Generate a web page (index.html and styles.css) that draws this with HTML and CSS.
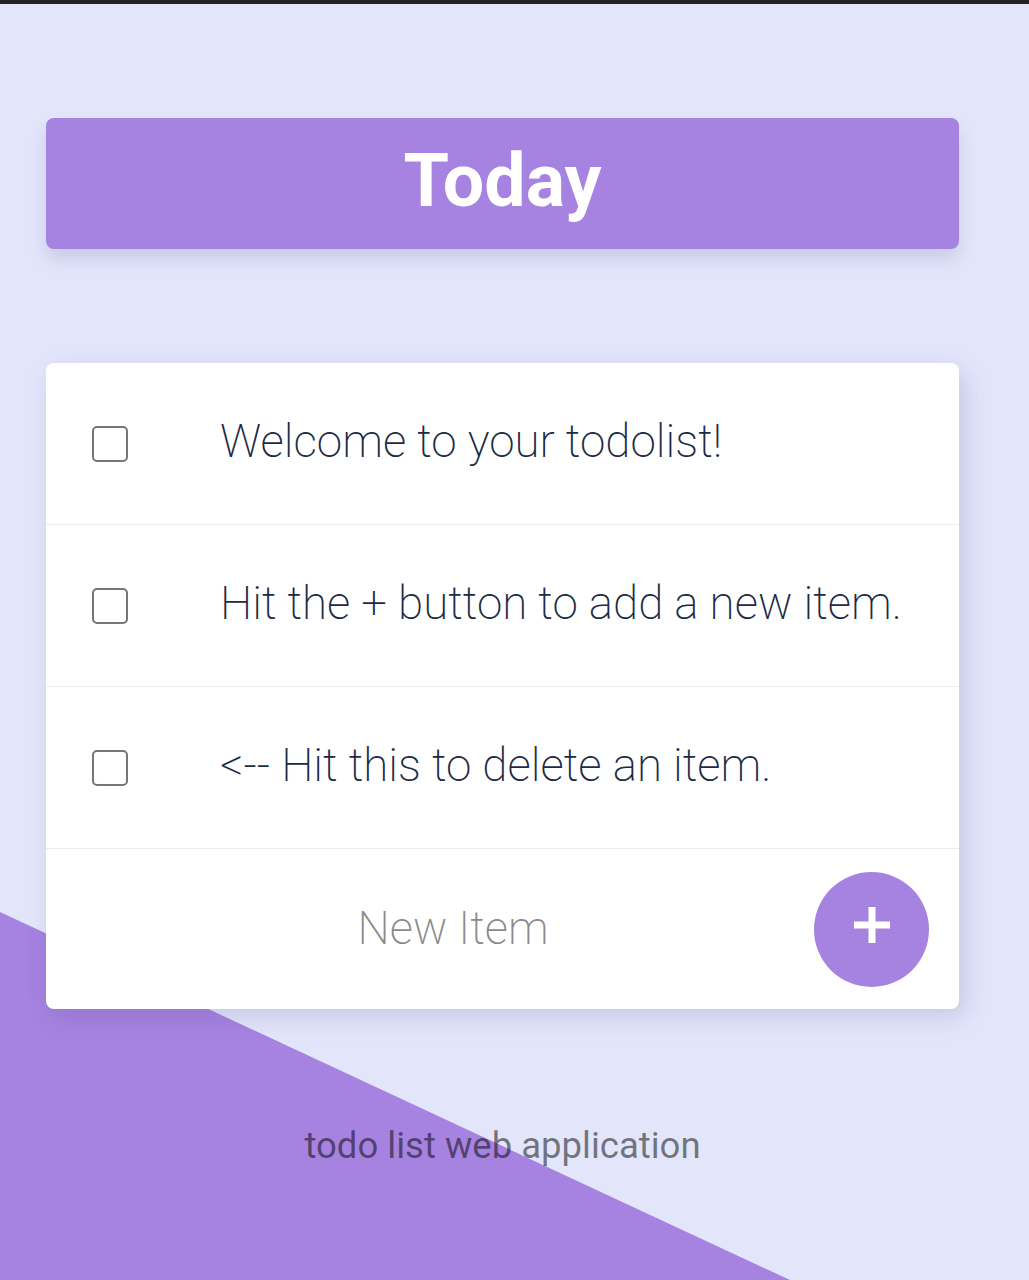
FILE: index.html
```html
<!DOCTYPE html>
<html lang="en">
<head>
<meta charset="utf-8">
<title>To Do List</title>
<link rel="stylesheet" href="styles.css">
</head>
<body>
<div class="topbar"></div>
<div class="backdrop"></div>
<main class="page">
  <div class="heading">
    <h1>Today</h1>
  </div>
  <div class="card">
    <div class="item">
      <span class="check"></span>
      <p>Welcome to your todolist!</p>
    </div>
    <div class="item">
      <span class="check"></span>
      <p>Hit the + button to add a new item.</p>
    </div>
    <div class="item">
      <span class="check"></span>
      <p>&lt;-- Hit this to delete an item.</p>
    </div>
    <form class="add-row">
      <input type="text" class="new-item" placeholder="New Item" autocomplete="off">
      <button type="button" class="add-btn" aria-label="Add">
        <svg width="36" height="36" viewBox="0 0 36 36"><rect x="14.5" y="0" width="7" height="36" fill="#fff"/><rect x="0" y="14.5" width="36" height="7" fill="#fff"/></svg>
      </button>
    </form>
  </div>
  <footer class="footer">todo list web application</footer>
</main>
</body>
</html>
```

FILE: styles.css
```css
html, body {
  margin: 0;
  padding: 0;
}
body {
  background: #e3e6fb;
  font-family: Roboto, "Liberation Sans", sans-serif;
  min-height: 1280px;
  position: relative;
  overflow: hidden;
}
.topbar {
  height: 4px;
  background: #222225;
}
.backdrop {
  position: absolute;
  left: 0;
  top: 0;
  width: 100%;
  height: 1280px;
  background: #a683e0;
  clip-path: polygon(0 912px, 790px 1280px, 0 1280px);
  z-index: 0;
}
.page {
  position: relative;
  z-index: 1;
  margin-left: 46px;
  width: 913px;
  display: flex;
  flex-direction: column;
}
.heading {
  margin-top: 114px;
  height: 131px;
  background: #a683e0;
  border-radius: 8px;
  box-shadow: 0 10px 18px rgba(60, 60, 120, 0.16);
  display: flex;
  align-items: center;
  justify-content: center;
}
.heading h1 {
  margin: 0;
  color: #fff;
  font-size: 73.5px;
  font-weight: 700;
  line-height: 1;
  position: relative;
  top: -2px;
}
.card {
  margin-top: 114px;
  background: #fff;
  border-radius: 8px;
  box-shadow: 6px 8px 26px rgba(60, 60, 130, 0.18);
  display: flex;
  flex-direction: column;
}
.item {
  height: 161px;
  border-bottom: 1px solid #ececf0;
  display: flex;
  align-items: center;
}
.check {
  width: 32px;
  height: 32px;
  border: 2px solid #767676;
  border-radius: 5px;
  margin-left: 46px;
  flex: none;
}
.item p {
  margin: 0 0 0 92px;
  font-size: 45.7px;
  font-weight: 200;
  color: #1c2b46;
  line-height: 1;
  position: relative;
  top: -2px;
}
.add-row {
  height: 160px;
  margin: 0;
  display: flex;
  align-items: center;
}
.new-item {
  flex: 1;
  margin-left: 54px;
  margin-right: 8px;
  border: none;
  outline: none;
  background: transparent;
  text-align: center;
  font-family: Roboto, "Liberation Sans", sans-serif;
  font-size: 45.5px;
  font-weight: 200;
  color: #333;
  padding: 0;
  height: 60px;
  position: relative;
  top: -1px;
}
.new-item::placeholder {
  color: #8a8a8a;
}
.add-btn {
  width: 115px;
  height: 115px;
  border-radius: 50%;
  border: none;
  background: #a683e0;
  margin-right: 30px;
  margin-top: 1px;
  padding: 0;
  display: flex;
  align-items: center;
  justify-content: center;
  flex: none;
}
.add-btn svg {
  position: relative;
  top: -5px;
}
.footer {
  margin-top: 117px;
  text-align: center;
  font-size: 36.5px;
  color: rgba(0, 0, 0, 0.5);
  line-height: 40px;
}
```
